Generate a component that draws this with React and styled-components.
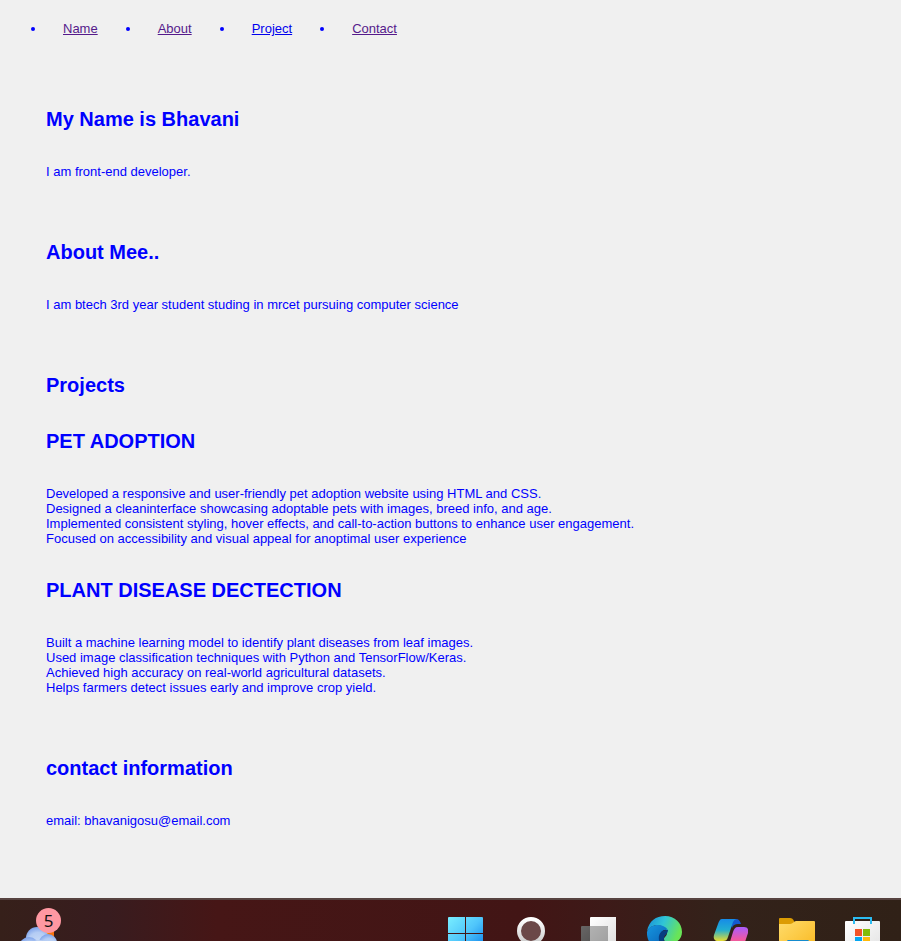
import React from "react";
import styled, { createGlobalStyle } from "styled-components";

const GlobalStyle = createGlobalStyle`
  * { box-sizing: border-box; }
  body {
    margin: 0;
    background: #f0f0f0;
    color: #0000ff;
    font-family: Arial, "Liberation Sans", sans-serif;
    font-size: 13px;
    line-height: 15px;
  }
`;

const Page = styled.div`
  min-height: 100vh;
  display: flex;
  flex-direction: column;
`;

const NavList = styled.ul`
  display: flex;
  flex-wrap: wrap;
  gap: 60px;
  margin: 0;
  padding: 21px 20px 0 63px;
  list-style: none;
`;

const NavItem = styled.li`
  position: relative;
  &::before {
    content: "";
    position: absolute;
    top: 6px;
    right: 100%;
    margin-right: 28px;
    width: 4px;
    height: 4px;
    border-radius: 50%;
    background: #0000ff;
  }
`;

const NavLink = styled.a`
  color: ${(p) => (p.$visited ? "#551a8b" : "#0000ee")};
  text-decoration: underline;
`;

const Main = styled.main`
  flex: 1;
  display: flex;
  flex-direction: column;
  gap: 62px;
  padding: 72px 46px 67px;
`;

const Section = styled.section`
  display: flex;
  flex-direction: column;
  gap: 33px;
`;

const Heading = styled.h2`
  margin: 0;
  font-size: 20px;
  line-height: 23px;
  font-weight: bold;
`;

const Text = styled.p`
  margin: 0;
`;

const Line = styled.span`
  display: block;
`;

const Taskbar = styled.footer`
  height: 43px;
  flex: none;
  overflow: hidden;
  display: flex;
  justify-content: space-between;
  padding: 8px 20px 0;
  border-top: 2px solid #574341;
  background: linear-gradient(90deg, #36201a 0%, #381c1f 12%, #461616 24%, #421515 58%, #3d1a18 67%, #33221a 80%, #302117 100%);
`;

const Weather = styled.div`
  position: relative;
  width: 42px;
  height: 42px;
`;

const Badge = styled.span`
  position: absolute;
  top: 0;
  right: 1px;
  width: 25px;
  height: 25px;
  border-radius: 50%;
  background: #ff98a2;
  color: #111;
  font: 17px/25px "Noto Sans", sans-serif;
  text-align: center;
`;

const Apps = styled.div`
  display: flex;
  justify-content: space-between;
  width: 434px;
  padding-top: 8px;
`;

const AppButton = styled.button`
  width: 36px;
  height: 36px;
  padding: 0;
  border: 0;
  background: none;
  svg { display: block; }
`;

const navigation = [
  { label: "Name", href: "#name", visited: true },
  { label: "About", href: "#about", visited: true },
  { label: "Project", href: "#project", visited: false },
  { label: "Contact", href: "#contact", visited: true },
];

const projects = [
  {
    title: "PET ADOPTION",
    lines: [
      "Developed a responsive and user-friendly pet adoption website using HTML and CSS.",
      "Designed a cleaninterface showcasing adoptable pets with images, breed info, and age.",
      "Implemented consistent styling, hover effects, and call-to-action buttons to enhance user engagement.",
      "Focused on accessibility and visual appeal for anoptimal user experience",
    ],
  },
  {
    title: "PLANT DISEASE DECTECTION",
    lines: [
      "Built a machine learning model to identify plant diseases from leaf images.",
      "Used image classification techniques with Python and TensorFlow/Keras.",
      "Achieved high accuracy on real-world agricultural datasets.",
      "Helps farmers detect issues early and improve crop yield.",
    ],
  },
];

function Gradient({ id, from, to, mid, x2 = 1, y2 = 1 }) {
  return (
    <linearGradient id={id} x1="0" y1="0" x2={x2} y2={y2}>
      <stop offset="0" stopColor={from} />
      {mid && <stop offset="0.5" stopColor={mid} />}
      <stop offset="1" stopColor={to} />
    </linearGradient>
  );
}

const WeatherIcon = () => (
  <svg width="42" height="42" viewBox="0 0 42 42" aria-hidden="true">
    <defs>
      <radialGradient id="cloud" cx="0.55" cy="0.7" r="0.75">
        <stop offset="0" stopColor="#c9dbf6" />
        <stop offset="0.6" stopColor="#b4ccf4" />
        <stop offset="1" stopColor="#7299e8" />
      </radialGradient>
    </defs>
    <circle cx="25" cy="26" r="9" fill="#ff9d20" />
    <path d="M28 23h6v8h-6z" fill="#f8740e" />
    <circle cx="17" cy="30" r="11" fill="url(#cloud)" />
    <circle cx="28" cy="35" r="9" fill="url(#cloud)" />
    <circle cx="9" cy="39" r="10" fill="url(#cloud)" />
    <ellipse cx="19" cy="38" rx="9" ry="6" fill="#bdd1f3" />
  </svg>
);

const icons = {
  Start: (
    <>
      <defs><Gradient id="start" from="#79eeff" mid="#4fc5fb" to="#087be8" /></defs>
      <path d="M2 1h16v16H1V2a1 1 0 0 1 1-1zM19 1h16a1 1 0 0 1 1 1v15H19zM1 18h17v18H1zM19 18h17v18H19z" fill="url(#start)" />
    </>
  ),
  Search: (
    <>
      <defs><Gradient id="ring" from="#fff" to="#ccc" x2={0} /></defs>
      <circle cx="18" cy="15" r="12" fill="#6b4848" stroke="url(#ring)" strokeWidth="4" />
      <path d="M28 27l6 6" stroke="#ddd" strokeWidth="4" />
    </>
  ),
  "Task view": (
    <>
      <defs>
        <Gradient id="white" from="#fff" to="#dedede" />
        <Gradient id="gray" from="#686565" to="#444" />
        <Gradient id="overlap" from="#b2b2b2" to="#a0a0a0" />
      </defs>
      <rect x="10" y="1" width="27" height="27" rx="1" fill="url(#white)" />
      <rect x="1" y="10" width="27" height="27" rx="1" fill="url(#gray)" />
      <path d="M10 10h17a1 1 0 0 1 1 1v17H10z" fill="url(#overlap)" />
    </>
  ),
  Edge: (
    <>
      <defs>
        <Gradient id="edgeTop" from="#168bda" mid="#30c5d6" to="#69e457" y2={0.35} />
        <Gradient id="edgeLeft" from="#1695df" to="#0552a9" />
      </defs>
      <path d="M1 15C3 5 10 0 19 0c10 0 17 7 17 16 0 7-5 11-12 11-4 0-6-2-6-4 0-2 3-3 3-6 0-7-13-12-20-2z" fill="url(#edgeTop)" />
      <path d="M1 16C3 8 17 6 22 14c-5-1-8 2-8 7 0 7 7 12 15 12-13 7-29-3-28-17z" fill="url(#edgeLeft)" />
      <path d="M22 14c-8-1-12 7-7 15 4 6 11 6 14 4-8 0-12-5-11-11 0-3 4-4 4-8z" fill="#083d80" />
    </>
  ),
  Copilot: (
    <>
      <defs>
        <Gradient id="pilotLeft" from="#168be8" mid="#22aed0" to="#e9dc2f" x2={0} />
        <Gradient id="pilotRight" from="#a95cff" mid="#ed57a5" to="#ff7760" x2={0} />
      </defs>
      <path d="M17 3h7c3 0 4 2 5 5h-3c-3 0-5 1-6 4z" fill="#1359cf" />
      <path d="M10 3h15c-3 0-4 3-5 6l-4 12c-1 3-2 4-5 4H6c-3 0-5-2-4-6L6 8c1-3 2-5 4-5z" fill="url(#pilotLeft)" />
      <path d="M26 11h6c3 0 5 2 4 6l-4 12c-1 4-3 6-6 6H12c3 0 4-3 5-6l4-13c1-3 2-5 5-5z" fill="url(#pilotRight)" />
    </>
  ),
  "File Explorer": (
    <>
      <defs><Gradient id="folder" from="#ffdc6b" to="#f9b71e" /></defs>
      <path d="M1 2h10c2 0 3 1 4 3l1 3H0V3a1 1 0 0 1 1-1z" fill="#dc9c03" />
      <path d="M0 8h11c3 0 4-3 6-3h18a1 1 0 0 1 1 1v30H0z" fill="url(#folder)" />
      <path d="M8 36V25c0-1 1-1 2-1h18c1 0 2 0 2 1v11z" fill="#158bce" />
    </>
  ),
  Store: (
    <>
      <defs><Gradient id="bag" from="#fff" to="#e2e2e2" /></defs>
      <rect y="5" width="35" height="31" rx="1" fill="url(#bag)" />
      <path d="M9 8V2h17v6" fill="none" stroke="#2bbcf2" strokeWidth="2" />
      <path d="M10 13h7v7h-7z" fill="#f35325" />
      <path d="M18 13h7v7h-7z" fill="#81bc06" />
      <path d="M10 21h7v7h-7z" fill="#05a6f0" />
      <path d="M18 21h7v7h-7z" fill="#ffba08" />
    </>
  ),
};

export default function App() {
  return (
    <Page>
      <GlobalStyle />
      <nav>
        <NavList>
          {navigation.map((item) => (
            <NavItem key={item.label}>
              <NavLink href={item.href} $visited={item.visited}>{item.label}</NavLink>
            </NavItem>
          ))}
        </NavList>
      </nav>
      <Main>
        <Section id="name">
          <Heading>My Name is Bhavani</Heading>
          <Text>I am front-end developer.</Text>
        </Section>
        <Section id="about">
          <Heading>About Mee..</Heading>
          <Text>I am btech 3rd year student studing in mrcet pursuing computer science</Text>
        </Section>
        <Section id="project">
          <Heading>Projects</Heading>
          {projects.map((project) => (
            <React.Fragment key={project.title}>
              <Heading>{project.title}</Heading>
              <Text>{project.lines.map((line) => <Line key={line}>{line}</Line>)}</Text>
            </React.Fragment>
          ))}
        </Section>
        <Section id="contact">
          <Heading>contact information</Heading>
          <Text>email: bhavanigosu@email.com</Text>
        </Section>
      </Main>
      <Taskbar>
        <Weather><WeatherIcon /><Badge>5</Badge></Weather>
        <Apps>
          {Object.entries(icons).map(([name, drawing]) => (
            <AppButton key={name} aria-label={name}>
              <svg width="36" height="36" viewBox="0 0 36 36" aria-hidden="true">{drawing}</svg>
            </AppButton>
          ))}
        </Apps>
      </Taskbar>
    </Page>
  );
}
